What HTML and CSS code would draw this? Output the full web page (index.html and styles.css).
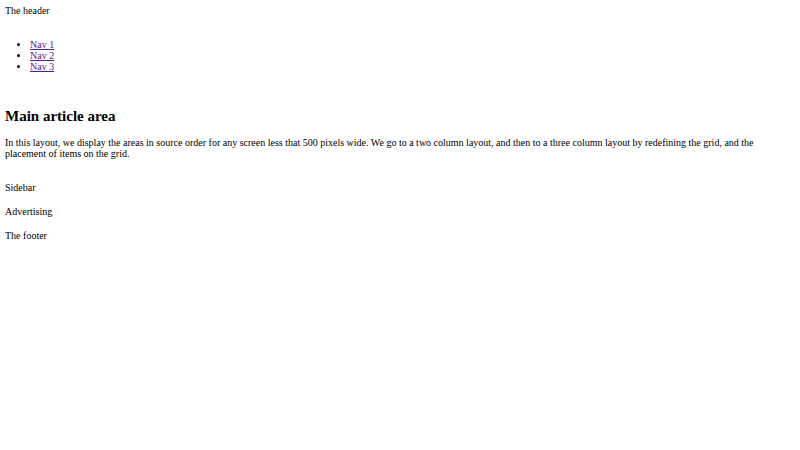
FILE: index.html
```html
<!DOCTYPE html>
<html lang="en">
<head>
    <meta charset="UTF-8">
    <meta name="viewport" content="width=device-width, initial-scale=1.0">
    <title>Grid template areas</title>
    <link rel="stylesheet" href="styles.css">
</head>
<body>
    <div class="wrapper">
        <header class="main-head">The header</header>
        <nav class="main-nav">
            <ul>
                <li><a href="#">Nav 1</a></li>
                <li><a href="#">Nav 2</a></li>
                <li><a href="#">Nav 3</a></li>
            </ul>
        </nav>
        <article class="content">
            <h2>Main article area</h2>
            <p>In this layout, we display the areas in source order for any screen less that 500 pixels wide. We go to a two column layout, and then to a three column layout by redefining the grid, and the placement of items on the grid.</p>
        </article>
        <aside class="side">Sidebar</aside>
        <div class="ad">Advertising</div>
        <footer class="main-footer">The footer</footer>
    </div>
</body>
</html>
```

FILE: styles.css
```css
/* Base styles */
body {
    font-family: "Liberation Serif", "Times New Roman", serif;
    font-size: 10px;
    margin: 5px;
    color: #000;
    background-color: #fff;
}

/* Single column grid, areas in source order */
.wrapper {
    display: grid;
    gap: 13px;
    grid-template-areas:
        "header"
        "nav"
        "content"
        "sidebar"
        "ad"
        "footer";
}

.main-head { grid-area: header; }
.content { grid-area: content; }
.main-nav { grid-area: nav; }
.side { grid-area: sidebar; }
.ad { grid-area: ad; }
.main-footer { grid-area: footer; }

.main-nav ul {
    margin: 10px 0;
    padding-left: 25px;
}

.main-nav a {
    color: #551a8b;
}

.content h2 {
    font-size: 15px;
    margin: 12.5px 0;
}

.content p {
    margin: 10px 0;
}
```
